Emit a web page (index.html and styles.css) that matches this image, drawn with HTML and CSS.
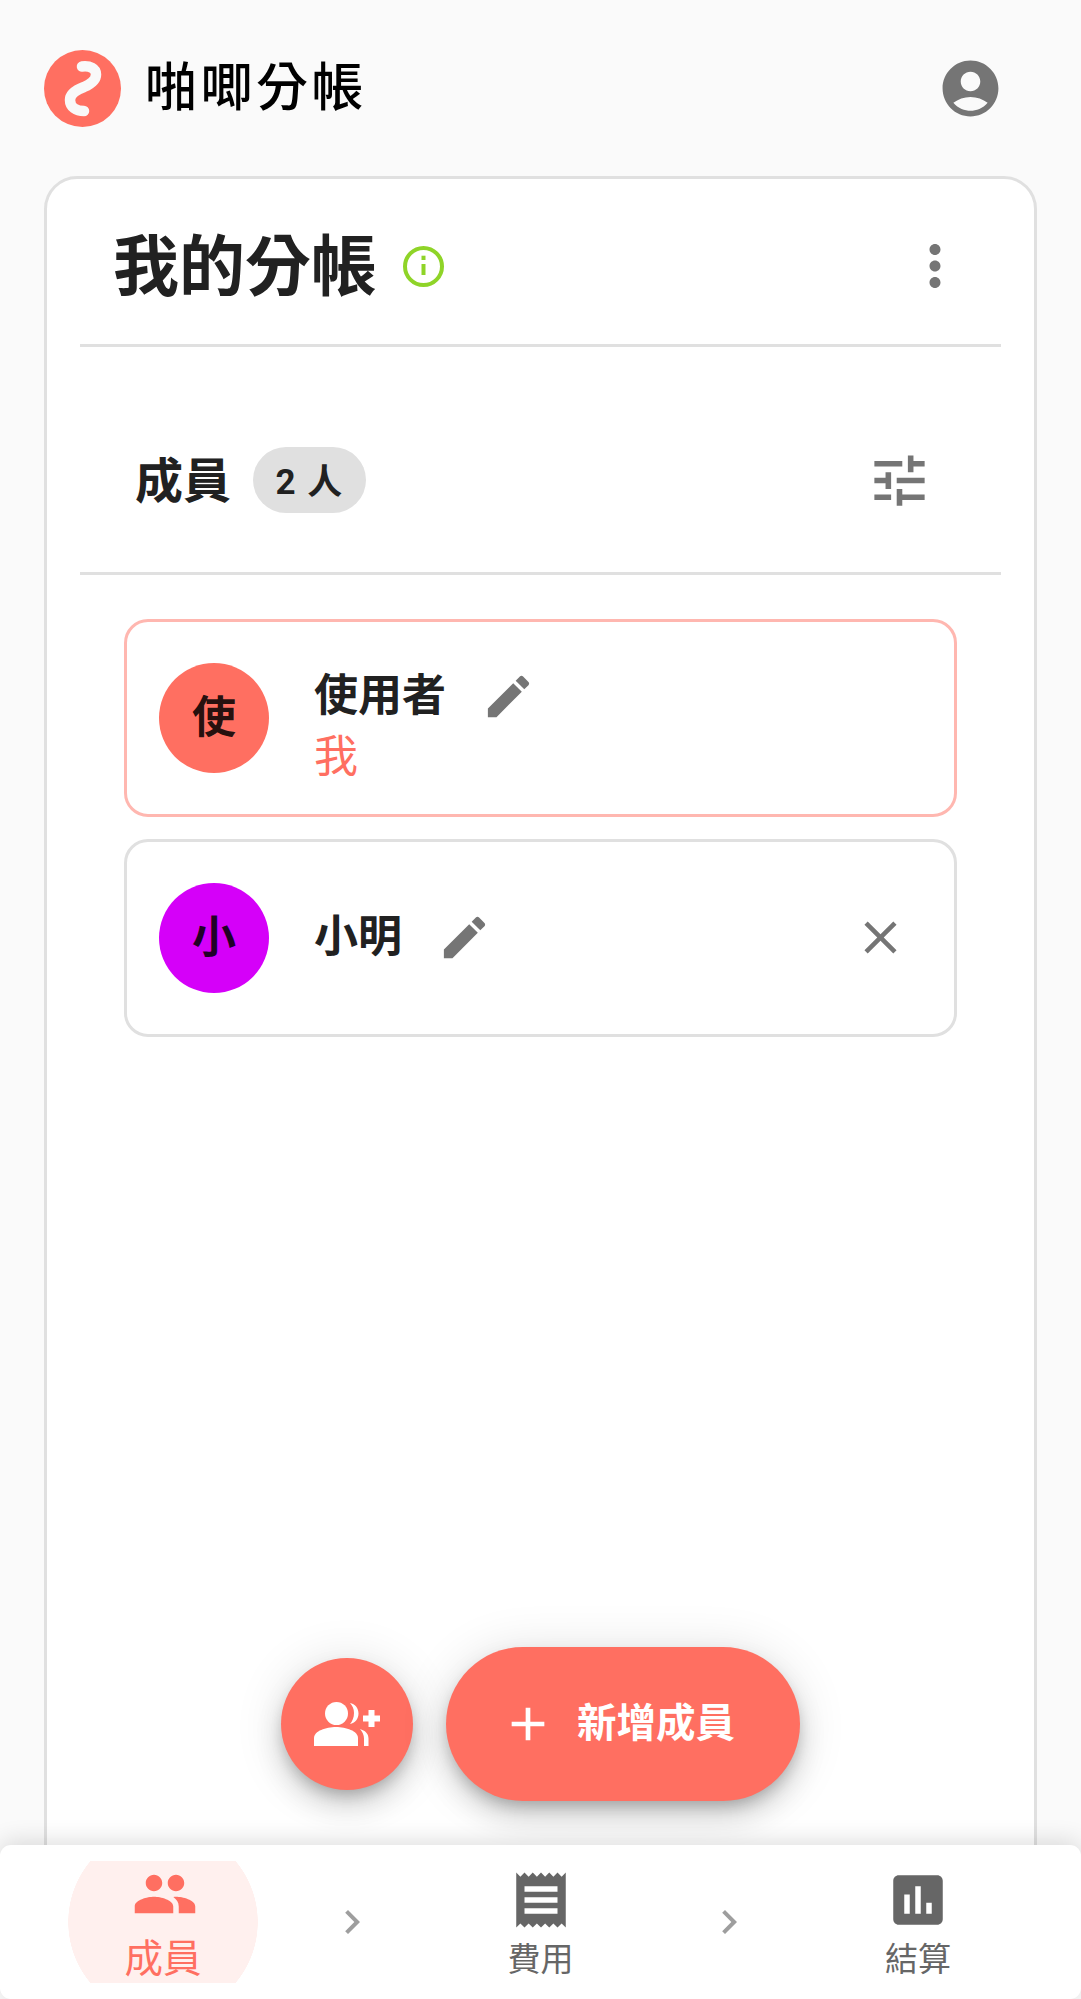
FILE: index.html
```html
<!DOCTYPE html>
<html>
<head>
    <meta charset="utf-8">
    <link rel="stylesheet" href="styles.css">
</head>
<body>
    <div class="app">
        <header class="topbar">
            <svg class="logo" viewBox="0 0 77 77">
                <circle cx="38.5" cy="38.5" r="38.5" fill="#ff6f61"/>
                <path d="M38 16.5c8-1 14 2 14 8 0 6-5 9.500-12 12.500-8 3-14 7-14 13 0 7 6 11 14 11" fill="none" stroke="#f9f9f9" stroke-width="10.5" stroke-linecap="round"/>
            </svg>
            <span class="brand">啪唧分帳</span>
            <svg class="account" viewBox="0 0 24 24"><path d="M12 2C6.48 2 2 6.48 2 12s4.48 10 10 10 10-4.48 10-10S17.52 2 12 2zm0 4c1.93 0 3.5 1.57 3.5 3.5S13.93 13 12 13s-3.5-1.57-3.5-3.5S10.07 6 12 6zm0 14c-2.03 0-4.43-.82-6.14-2.88C7.55 15.8 9.68 15 12 15s4.45.8 6.14 2.12C16.43 19.18 14.03 20 12 20z"/></svg>
        </header>

        <main class="card">
            <div class="card-head">
                <h1>我的分帳</h1>
                <svg class="info" viewBox="0 0 41 41">
                    <circle cx="20.5" cy="20.5" r="18.5" fill="none" stroke="#8fd428" stroke-width="4"/>
                    <rect x="18.5" y="18" width="4" height="11" fill="#8fd428"/>
                    <rect x="18.5" y="9.700" width="4" height="4.300" fill="#8fd428"/>
                </svg>
                <svg class="more" viewBox="0 0 24 24"><path d="M12 8c1.1 0 2-.9 2-2s-.9-2-2-2-2 .9-2 2 .9 2 2 2zm0 2c-1.1 0-2 .9-2 2s.9 2 2 2 2-.9 2-2-.9-2-2-2zm0 6c-1.1 0-2 .9-2 2s.9 2 2 2 2-.9 2-2-.9-2-2-2z"/></svg>
            </div>

            <div class="section-head">
                <h2>成員</h2>
                <span class="count">2 人</span>
                <svg class="tune" viewBox="0 0 24 24"><path d="M3 17v2h6v-2H3zM3 5v2h10V5H3zm10 16v-2h8v-2h-8v-2h-2v6h2zM7 9v2H3v2h4v2h2V9H7zm14 4v-2H11v2h10zm-6-4h2V7h4V5h-4V3h-2v6z"/></svg>
            </div>

            <div class="members">
                <div class="member member-me">
                    <div class="avatar avatar-red">使</div>
                    <div class="member-info">
                        <div class="name-row">
                            <span class="name">使用者</span>
                            <svg class="edit" viewBox="0 0 24 24"><path d="M3 17.25V21h3.75L17.81 9.94l-3.75-3.75L3 17.25zM20.71 7.04c.39-.39.39-1.02 0-1.41l-2.34-2.34c-.39-.39-1.02-.39-1.41 0l-1.83 1.83 3.75 3.75 1.83-1.83z"/></svg>
                        </div>
                        <div class="me-tag">我</div>
                    </div>
                </div>
                <div class="member">
                    <div class="avatar avatar-purple">小</div>
                    <div class="member-info">
                        <div class="name-row">
                            <span class="name">小明</span>
                            <svg class="edit" viewBox="0 0 24 24"><path d="M3 17.25V21h3.75L17.81 9.94l-3.75-3.75L3 17.25zM20.71 7.04c.39-.39.39-1.02 0-1.41l-2.34-2.34c-.39-.39-1.02-.39-1.41 0l-1.83 1.83 3.75 3.75 1.83-1.83z"/></svg>
                        </div>
                    </div>
                    <svg class="remove" viewBox="0 0 24 24"><path d="M19 6.41L17.59 5 12 10.59 6.41 5 5 6.41 10.59 12 5 17.59 6.41 19 12 13.41 17.59 19 19 17.59 13.41 12 19 6.41z"/></svg>
                </div>
            </div>
        </main>

        <div class="fabs">
            <button class="fab-round">
                <svg viewBox="0 0 66 44">
                    <circle cx="22.500" cy="11.500" r="11.500"/>
                    <path d="M0 44v-8c0-7 12-11 22-11s22 4 22 11v8z"/>
                    <path d="M36 1c5 1 8.500 5 8.500 10.500S41 21 36 22c2.500-3 4-6.500 4-11S38.500 4 36 1z"/>
                    <path d="M46 27c5 1.500 8.500 4.500 8.500 9.500V44H50v-7.500c0-3.500-1.500-6.500-4-9.500z"/>
                    <path d="M54.500 8h6v5.500H66v6h-5.500V25h-6v-5.500H49v-6h5.500z"/>
                </svg>
            </button>
            <button class="fab-wide">
                <svg viewBox="0 0 24 24"><path d="M19 13h-6v6h-2v-6H5v-2h6V5h2v6h6v2z"/></svg>
                <span>新增成員</span>
            </button>
        </div>

        <nav class="bottom-nav">
            <a class="tab tab-active">
                <svg viewBox="0 0 24 24"><path d="M16 11c1.66 0 2.99-1.34 2.99-3S17.66 5 16 5c-1.66 0-3 1.34-3 3s1.34 3 3 3zm-8 0c1.66 0 2.99-1.34 2.99-3S9.66 5 8 5C6.34 5 5 6.34 5 8s1.34 3 3 3zm0 2c-2.33 0-7 1.17-7 3.5V19h14v-2.5c0-2.33-4.67-3.5-7-3.5zm8 0c-.29 0-.62.02-.97.05 1.16.84 1.97 1.97 1.97 3.45V19h6v-2.5c0-2.33-4.67-3.5-7-3.5z"/></svg>
                <span>成員</span>
            </a>
            <svg class="step" viewBox="0 0 24 24"><path d="M10 6L8.59 7.41 13.17 12l-4.58 4.59L10 18l6-6z"/></svg>
            <a class="tab">
                <svg viewBox="0 0 24 24"><path d="M18 17H6v-2h12v2zm0-4H6v-2h12v2zm0-4H6V7h12v2zM3 22l1.5-1.5L6 22l1.5-1.5L9 22l1.5-1.5L12 22l1.5-1.5L15 22l1.5-1.5L18 22l1.5-1.5L21 22V2l-1.5 1.5L18 2l-1.5 1.5L15 2l-1.5 1.5L12 2l-1.5 1.5L9 2 7.5 3.5 6 2 4.5 3.5 3 2v20z"/></svg>
                <span>費用</span>
            </a>
            <svg class="step" viewBox="0 0 24 24"><path d="M10 6L8.59 7.41 13.17 12l-4.58 4.59L10 18l6-6z"/></svg>
            <a class="tab">
                <svg viewBox="0 0 24 24"><path d="M19 3H5c-1.1 0-2 .9-2 2v14c0 1.1.9 2 2 2h14c1.1 0 2-.9 2-2V5c0-1.1-.9-2-2-2zM9 17H7v-7h2v7zm4 0h-2V7h2v10zm4 0h-2v-4h2v4z"/></svg>
                <span>結算</span>
            </a>
        </nav>
    </div>
</body>
</html>
```

FILE: styles.css
```css
* {
    box-sizing: border-box;
}
body {
    margin: 0;
    background: #fafafa;
    color: #212121;
    font-family: Roboto, "Noto Sans CJK TC", sans-serif;
}
svg {
    display: block;
    flex-shrink: 0;
}
.app {
    position: relative;
    display: flex;
    flex-direction: column;
    height: 1999px;
    overflow: hidden;
}
.topbar {
    display: flex;
    align-items: center;
    height: 176px;
    padding: 0 77px 0 44px;
}
.logo {
    width: 77px;
    height: 77px;
}
.brand {
    margin-left: 24px;
    margin-bottom: 10px;
    font-size: 52px;
    font-weight: 500;
    letter-spacing: 3.5px;
    color: #000;
}
.account {
    width: 67px;
    height: 67px;
    margin-left: auto;
    fill: #757575;
}
.card {
    flex: 1;
    margin: 0 44px;
    padding: 0 33px;
    background: #fff;
    border: 3px solid #e0e0e0;
    border-radius: 33px;
}
.card-head {
    display: flex;
    align-items: center;
    height: 168px;
    padding-top: 9px;
    padding-left: 33px;
    border-bottom: 3px solid #e0e0e0;
}
h1 {
    margin: 0 0 11px;
    font-size: 66px;
    font-weight: 700;
}
.info {
    width: 41px;
    height: 41px;
    margin-left: 26px;
}
.more {
    width: 66px;
    height: 66px;
    margin-left: auto;
    margin-right: 33px;
    fill: #757575;
}
.section-head {
    display: flex;
    align-items: center;
    height: 228px;
    padding: 41px 68px 0 55px;
    border-bottom: 3px solid #e0e0e0;
}
h2 {
    margin: 0 0 6px;
    font-size: 48px;
    font-weight: 700;
}
.count {
    display: flex;
    align-items: center;
    height: 66px;
    margin-left: 22px;
    padding: 0 22.5px 4px;
    border-radius: 33px;
    background: #e0e0e0;
    font-size: 35px;
    font-weight: 700;
    letter-spacing: 1.5px;
}
.tune {
    width: 67px;
    height: 67px;
    margin-left: auto;
    fill: #757575;
}
.members {
    display: flex;
    flex-direction: column;
    gap: 22.5px;
    padding: 44px 44px 0;
}
.member {
    display: flex;
    align-items: center;
    height: 197.5px;
    padding: 0 46px 0 32px;
    border: 3px solid #e0e0e0;
    border-radius: 24px;
}
.member-me {
    border-color: #ffb7b0;
}
.avatar {
    display: flex;
    align-items: center;
    justify-content: center;
    width: 110px;
    height: 110px;
    padding-bottom: 8px;
    border-radius: 50%;
    color: rgba(0, 0, 0, 0.87);
    font-size: 44px;
    font-weight: 700;
}
.avatar-red {
    background: #ff6f61;
}
.avatar-purple {
    background: #d500f9;
}
.member-info {
    margin-left: 45px;
}
.name-row {
    display: flex;
    align-items: center;
    height: 55px;
}
.name {
    margin-bottom: 9px;
    font-size: 44px;
    font-weight: 700;
}
.edit {
    width: 55px;
    height: 55px;
    margin-left: 35px;
    fill: #757575;
}
.me-tag {
    height: 43px;
    font-size: 44px;
    line-height: 67px;
    color: #ff6f61;
}
.remove {
    width: 55px;
    height: 55px;
    margin-left: auto;
    fill: #757575;
}
.fabs {
    position: absolute;
    left: 281px;
    top: 1647px;
    display: flex;
    align-items: center;
    gap: 33px;
}
.fabs button {
    display: flex;
    align-items: center;
    border: none;
    background: #ff6f61;
    color: #fff;
    font-family: inherit;
    box-shadow: 0 8px 14px -3px rgba(0, 0, 0, 0.2), 0 16px 28px rgba(0, 0, 0, 0.14), 0 3px 50px rgba(0, 0, 0, 0.12);
}
.fab-round {
    justify-content: center;
    width: 132px;
    height: 132px;
    padding: 0;
    border-radius: 50%;
}
.fab-round svg {
    width: 66px;
    height: 44px;
    fill: #fff;
}
.fab-wide {
    width: 354px;
    height: 154px;
    padding: 0 0 0 54px;
    border-radius: 77px;
    font-size: 39.5px;
    font-weight: 700;
}
.fab-wide svg {
    width: 56px;
    height: 56px;
    margin-right: 21px;
    fill: #fff;
}
.fab-wide span {
    margin-bottom: 10px;
}
.bottom-nav {
    position: absolute;
    left: 0;
    right: 0;
    bottom: 0;
    display: flex;
    align-items: center;
    justify-content: space-between;
    height: 154px;
    padding: 0 68px;
    background: #fff;
    border-radius: 11px;
    box-shadow: 0 -3px 24px rgba(0, 0, 0, 0.14);
}
.tab {
    display: flex;
    flex-direction: column;
    align-items: center;
    width: 190px;
    height: 122px;
    padding-top: 6px;
    color: #666;
    fill: #666;
    font-size: 33px;
    line-height: 40px;
}
.tab svg {
    width: 66px;
    height: 66px;
}
.tab span {
    margin-top: 7px;
}
.tab-active {
    padding-top: 0;
    color: #ff6f61;
    fill: #ff6f61;
    font-size: 38.5px;
    line-height: 44px;
    background: radial-gradient(circle 95px at center, #fff0ee 99.5%, transparent 100%);
}
.tab-active svg {
    margin-left: 3px;
}
.tab-active span {
    margin-top: 10px;
}
.step {
    width: 48px;
    height: 48px;
    fill: #9e9e9e;
}
```
